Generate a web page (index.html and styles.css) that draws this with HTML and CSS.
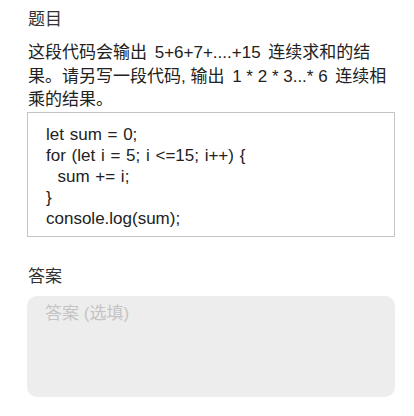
FILE: index.html
```html
<!DOCTYPE html>
<html lang="zh-CN">
<head>
<meta charset="utf-8">
<link rel="stylesheet" href="styles.css">
</head>
<body>
<div class="page">
  <div class="label">题目</div>
  <p class="question">这段代码会输出 5+6+7+....+15 连续求和的结果。请另写一段代码<span class="expr">, </span>输出 <span class="expr">1 * 2 * 3...* 6</span> 连续相乘的结果。</p>
  <pre class="code">let sum = 0;
for (let i = 5; i &lt;=15; i++) {
  sum += i;
}
console.log(sum);</pre>
  <div class="label answer-label">答案</div>
  <div class="answer-box"><span class="placeholder">答案 (选填)</span></div>
</div>
</body>
</html>
```
FILE: styles.css
```css
html, body {
  margin: 0;
  padding: 0;
  background: #ffffff;
}
body {
  font-family: "Liberation Sans", Arial, "Noto Sans CJK SC", sans-serif;
  color: #333333;
  font-size: 17px;
}
.page {
  padding: 8px 19px 0 27px;
  display: flex;
  flex-direction: column;
}
.label {
  line-height: 24px;
  height: 24px;
  margin-left: 1px;
}
.question {
  margin: 9px 0 0 1px;
  line-height: 23.5px;
  word-spacing: 3px;
  color: #222222;
}
.expr {
  word-spacing: 0;
}
.code {
  margin: 0;
  border: 1px solid #c4c4c4;
  padding: 11px 18px 7px;
  font-family: "Liberation Sans", Arial, sans-serif;
  font-size: 17px;
  line-height: 21px;
  color: #222222;
  word-spacing: 1px;
}
.answer-label {
  margin-top: 28px;
}
.answer-box {
  margin-top: 7px;
  height: 101px;
  background: #ededed;
  border-radius: 10px;
  padding: 6px 18px;
  box-sizing: border-box;
  line-height: 24px;
}
.placeholder {
  color: #c4c4c4;
}
```
